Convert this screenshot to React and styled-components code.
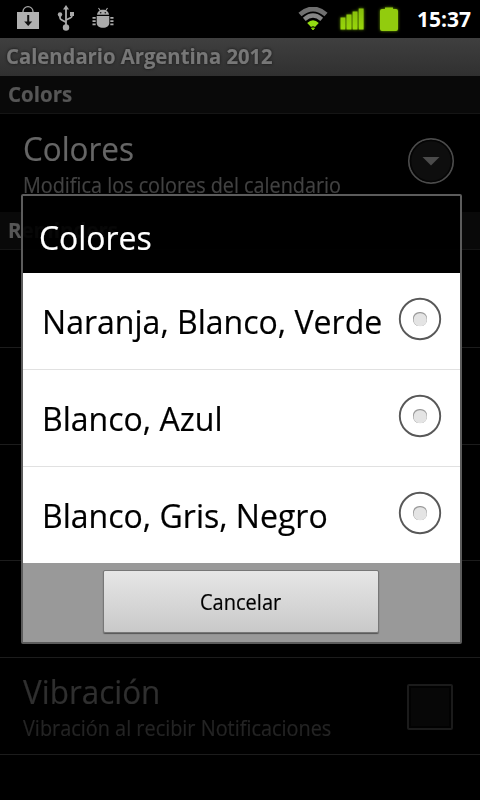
import React from 'react';
import styled, { createGlobalStyle } from 'styled-components';

const CHOICES = ['Naranja, Blanco, Verde', 'Blanco, Azul', 'Blanco, Gris, Negro'];

function MarketIcon() {
  return (
    <svg width="24" height="24" viewBox="0 0 24 24">
      <path d="M7 7V5.500a5 4.800 0 0 1 10 0V7" fill="none" stroke="#a8a8a8" strokeWidth="1.3" />
      <path d="M1 6h22v17H1z" fill="#b0b0b0" />
      <path d="M11.200 9h2v6.500h3L12.200 20 8.200 15.500h3z" fill="#111" />
    </svg>
  );
}

function UsbIcon() {
  return (
    <svg width="18" height="26" viewBox="0 0 18 26">
      <g fill="none" stroke="#aaa" strokeWidth="1.8">
        <path d="M9 3v18" />
        <path d="M3 10v2.5q0 1.6 1.4 2.3L9 17.3" />
        <path d="M15 8.500v2q0 1.600-1.400 2.300L9 15" />
      </g>
      <g fill="#aaa">
        <path d="M9 0l3 4.500H6z" />
        <circle cx="9" cy="22.500" r="3.200" />
        <circle cx="3" cy="9.500" r="2.200" />
        <path d="M13 7h4v4h-4z" />
      </g>
    </svg>
  );
}

function DebugIcon() {
  return (
    <svg width="22" height="22" viewBox="0 0 22 22" fill="#aaa">
      <path d="M6.500 1l2 3M15.500 1l-2 3" stroke="#aaa" strokeWidth="1.100" />
      <path d="M5 7.800c.3-3 2.700-5 6-5s5.700 2 6 5z" />
      <path d="M4.700 9h12.600v7c0 3-2.600 4.800-6.300 4.800S4.700 19 4.700 16z" />
      <path d="M.5 10h3.200v1.800H.5zM18.300 10h3.200v1.800h-3.200zM.5 13.200h3.200V15H.5zM18.300 13.200h3.200V15h-3.200zM.5 16.500h3.200v1.800H.5zM18.300 16.500h3.200v1.800h-3.200z" />
      <circle cx="8.700" cy="5.700" r=".8" fill="#111" />
      <circle cx="13.300" cy="5.700" r=".8" fill="#111" />
    </svg>
  );
}

function WifiIcon() {
  return (
    <svg width="30" height="24" viewBox="0 0 30 24" fill="none">
      <path d="M2 7.500Q15-3.500 28 7.500" stroke="#6f6f6f" strokeWidth="4.800" />
      <path d="M6.300 12.300Q15 4.800 23.700 12.300" stroke="#858585" strokeWidth="4.200" />
      <path d="M9.200 16Q15 10.500 20.800 16L17 20Q15 18.300 13 20z" fill="#94dc12" />
      <path d="M13.500 21h3L15 23z" fill="#8c0" stroke="#8c0" strokeLinejoin="round" />
    </svg>
  );
}

function SignalIcon() {
  return (
    <Glow width="24" height="22" viewBox="0 0 24 22" fill="url(#bars)">
      <defs>
        <linearGradient id="bars" x2="0" y2="1">
          <stop offset="0" stopColor="#86bd0c" />
          <stop offset="1" stopColor="#98d60a" />
        </linearGradient>
      </defs>
      <path d="M.5 9.500h4.900v12H.5zM6.500 6.500h5v15h-5zM12.600 3.500h4.900v18h-4.900zM18.700.5h4.900v21h-4.900z" />
    </Glow>
  );
}

function BatteryIcon() {
  return (
    <Glow width="18" height="25" viewBox="0 0 18 25">
      <path d="M5 2V.5h8V2h3q2 0 2 2v18q0 2-2 2H2q-2 0-2-2V4q0-2 2-2z" fill="#92cc0e" />
    </Glow>
  );
}

function RadioIcon() {
  return (
    <svg width="44" height="44" viewBox="0 0 44 44">
      <circle cx="22" cy="22" r="20.200" fill="#fff" stroke="#585858" strokeWidth="1.900" />
      <rect x="15" y="15" width="14" height="14" rx="6.300" fill="#999" />
      <rect x="15.700" y="16.200" width="13" height="13" rx="6" fill="#e4e4e4" />
    </svg>
  );
}

function App() {
  return (
    <Screen>
      <GlobalStyle />
      <StatusBar>
        <StatusGroup>
          <MarketIcon />
          <UsbIcon />
          <DebugIcon />
        </StatusGroup>
        <SystemGroup>
          <WifiIcon />
          <SignalIcon />
          <BatteryIcon />
          <Clock>15:37</Clock>
        </SystemGroup>
      </StatusBar>
      <TitleBar>
        <Text $squeeze={0.964}>Calendario Argentina 2012</Text>
      </TitleBar>

      <Category><Text $squeeze={0.975}>Colors</Text></Category>
      <Preference $height={98} $last>
        <div>
          <PreferenceTitle><Text $squeeze={0.952}>Colores</Text></PreferenceTitle>
          <Summary><Text $squeeze={0.943}>Modifica los colores del calendario</Text></Summary>
        </div>
        <MoreIcon width="48" height="48" viewBox="0 0 48 48">
          <circle cx="24" cy="24" r="22.200" fill="#0e0e0e" stroke="#4b4b4b" strokeWidth="1.700" />
          <circle cx="24" cy="24" r="20.500" fill="none" stroke="#050505" strokeWidth="1.500" />
          <path d="M15.500 20h17L24 28.500z" fill="#4b4b4b" />
        </MoreIcon>
      </Preference>
      <Category><Text $squeeze={0.975}>Reminders</Text></Category>
      <Preference $height={98} />
      <Preference $height={97} />
      <Preference $height={116} />
      <Preference $height={97} />
      <Preference $height={97} $disabled>
        <div>
          <PreferenceTitle><Text $squeeze={0.952}>Vibración</Text></PreferenceTitle>
          <Summary><Text $squeeze={0.947}>Vibración al recibir Notificaciones</Text></Summary>
        </div>
        <CheckBox />
      </Preference>

      <Dialog>
        <DialogTitle><Text $squeeze={0.967}>Colores</Text></DialogTitle>
        <ChoiceList>
          {CHOICES.map(choice => (
            <Choice key={choice}>
              <ChoiceLabel $squeeze={0.971}>{choice}</ChoiceLabel>
              <RadioIcon />
            </Choice>
          ))}
        </ChoiceList>
        <ButtonPanel>
          <Button><Text $squeeze={0.953} $origin="center">Cancelar</Text></Button>
        </ButtonPanel>
      </Dialog>
    </Screen>
  );
}

const GlobalStyle = createGlobalStyle`
  * {
    box-sizing: border-box;
  }

  body {
    margin: 0;
    background: #000;
  }

  svg {
    display: block;
    flex: none;
  }
`

const Screen = styled.div`
  position: relative;
  width: 480px;
  height: 800px;
  overflow: hidden;
  background: #000;
  font-family: "Open Sans", "Noto Sans", sans-serif;
  white-space: nowrap;
`

const Text = styled.span`
  display: inline-block;
  transform: scaleX(${props => props.$squeeze});
  transform-origin: ${props => props.$origin || 'left'};
  -webkit-text-stroke: 0.2px currentColor;
`

const StatusBar = styled.div`
  display: flex;
  justify-content: space-between;
  height: 38px;
  padding: 0 9px 0 16px;
`

const StatusGroup = styled.div`
  display: flex;
  align-items: center;
  gap: 17px;
  padding-bottom: 3px;
`

const SystemGroup = styled.div`
  display: flex;
  align-items: center;

  svg {
    margin-right: 12px;
  }

  svg + svg {
    margin-right: 16px;
  }

  svg + svg + svg {
    margin-right: 19px;
  }
`

const Glow = styled.svg`
  overflow: visible;
  filter: drop-shadow(0 0 1.5px #6a9a00);
`

const Clock = styled.span`
  color: #fff;
  font-size: 21px;
  font-weight: 700;
`

const MoreIcon = styled.svg`
  margin-bottom: 4px;
`

const TitleBar = styled.div`
  height: 38px;
  padding-left: 6px;
  background: linear-gradient(#3f3f3f, #303030);
  color: #777;
  font-size: 21px;
  font-weight: 700;
  line-height: 37px;
  text-shadow: 0 0 3px #111;
`

const Category = styled.div`
  height: 38px;
  padding-left: 8px;
  border-bottom: 1px solid #151515;
  background: #090909;
  color: #565656;
  font-size: 21px;
  font-weight: 700;
  line-height: 37px;
`

const Preference = styled.div`
  display: flex;
  align-items: center;
  justify-content: space-between;
  height: ${props => props.$height}px;
  padding: 0 25px 0 23px;
  border-bottom: ${props => props.$last ? '0' : '1px solid #1c1c1c'};
  color: ${props => props.$disabled ? '#2f2f2f' : '#666'};
  --summary: ${props => props.$disabled ? '#242424' : '#424242'};
`

const PreferenceTitle = styled.div`
  padding-top: 4px;
  font-size: 33px;
  line-height: 39px;
`

const Summary = styled.div`
  color: var(--summary);
  font-size: 21px;
  line-height: 34px;
`

const CheckBox = styled.div`
  width: 46px;
  height: 46px;
  margin: 2px 2px 0 0;
  border: 2px solid #1b1b1b;
  border-radius: 2px;
  background: #070707;
  box-shadow: inset 0 0 0 2px #020202;
`

const Dialog = styled.div`
  position: absolute;
  top: 194px;
  left: 21px;
  width: 441px;
  height: 450px;
  border: 2px solid #5c5c5c;
  border-radius: 2px;
`

const DialogTitle = styled.div`
  height: 77px;
  padding-left: 16px;
  background: rgba(0, 0, 0, 0.92);
  color: #fff;
  font-size: 33px;
  line-height: 83px;
`

const ChoiceList = styled.div`
  background: #fff;
`

const Choice = styled.div`
  display: flex;
  align-items: center;
  justify-content: space-between;
  height: 97px;
  padding: 0 18px 4px 19px;
  border-bottom: 1px solid #e1e1e1;

  &:last-child {
    height: 96px;
    border: 0;
  }
`

const ChoiceLabel = styled(Text)`
  padding-top: 4px;
  color: #000;
  font-size: 33px;
`

const ButtonPanel = styled.div`
  display: flex;
  justify-content: center;
  height: 79px;
  padding: 7px 1px 0 0;
  background: #999;
`

const Button = styled.button`
  width: 276px;
  height: 63px;
  padding: 0;
  border: 1px solid #777;
  border-radius: 2px;
  background: linear-gradient(#e6e6e6, #c9c9c9);
  box-shadow: 0 1px 1px #555;
  color: #000;
  font-family: inherit;
  font-size: 21px;
`

export default App;
